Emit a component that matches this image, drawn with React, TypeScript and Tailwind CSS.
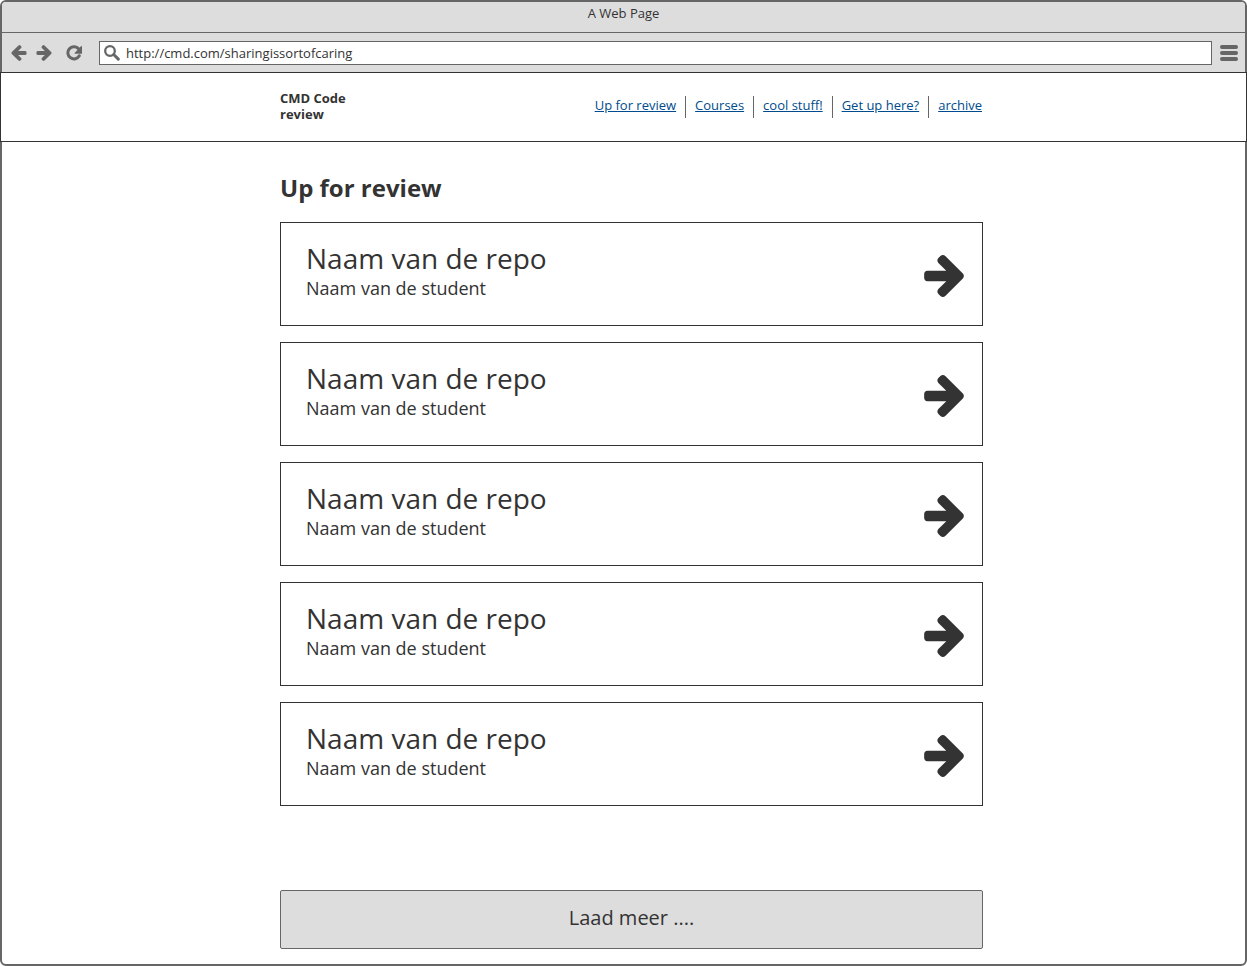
import React from "react";

const ARROW =
  "M1472 960q0 54-37 91l-651 651q-39 37-91 37-51 0-90-37l-75-75q-38-38-38-91t38-91l293-293h-704q-52 0-84.5-37.5t-32.5-90.5v-128q0-53 32.5-90.5t84.5-37.5h704l-293-294q-38-36-38-90t38-90l75-75q38-38 90-38 53 0 91 38l651 651q37 35 37 90z";

function ArrowIcon({ className }: { className: string }) {
  return (
    <svg viewBox="0 181 1472 1558" className={className} fill="currentColor" aria-hidden="true">
      <path d={ARROW} />
    </svg>
  );
}

function ReloadIcon() {
  return (
    <svg viewBox="0 0 16 16" className="size-4" fill="none" aria-hidden="true">
      <path
        d="M12.2 3.4A6.1 6.1 0 1 0 13.3 10.8"
        stroke="currentColor"
        strokeWidth="3"
        strokeLinecap="round"
      />
      <path d="M16 1.4v6.8q0 .5-.5.5H8.9q-.6-.2-.3-.7L15.2 1.1q.6-.3.8.3z" fill="currentColor" />
    </svg>
  );
}

function SearchIcon() {
  return (
    <svg viewBox="0 0 16 16" className="size-4 shrink-0 text-[#666]" fill="none" stroke="currentColor" aria-hidden="true">
      <circle cx="6" cy="6" r="4.8" strokeWidth="2.3" />
      <path d="M9.7 9.5l4.6 4.6" strokeWidth="3" strokeLinecap="round" />
    </svg>
  );
}

function MenuIcon() {
  return (
    <svg viewBox="0 0 18 16" className="h-4 w-[18px]" fill="currentColor" aria-hidden="true">
      <rect x="0" y="0" width="18" height="4" rx="1.9" />
      <rect x="0" y="6" width="18" height="4" rx="1.9" />
      <rect x="0" y="12" width="18" height="4" rx="1.9" />
    </svg>
  );
}

const links = ["Up for review", "Courses", "cool stuff!", "Get up here?", "archive"];

const repos = Array.from({ length: 5 }, (_, id) => ({
  id,
  name: "Naam van de repo",
  student: "Naam van de student",
}));

export default function App() {
  return (
    <div className="min-h-screen rounded-md border-2 border-[#666] bg-white font-['Open_Sans','Noto_Sans',sans-serif] text-[13px] text-[#333]">
      <div className="rounded-t bg-[#ddd]">
        <div className="h-[31px] border-b border-[#666] pt-px text-center leading-5">A Web Page</div>
        <div className="flex h-[39px] items-center pr-[7px] pl-[9px] text-[#666]">
          <button type="button" aria-label="Back" className="mr-[9px]">
            <ArrowIcon className="h-4 w-4 rotate-180" />
          </button>
          <button type="button" aria-label="Forward" className="mr-[14px]">
            <ArrowIcon className="h-4 w-4" />
          </button>
          <button type="button" aria-label="Reload" className="mr-[17px]">
            <ReloadIcon />
          </button>
          <label className="flex h-6 grow items-center gap-1.5 border border-[#666] bg-white pl-1">
            <SearchIcon />
            <input
              type="text"
              aria-label="Address"
              defaultValue="http://cmd.com/sharingissortofcaring"
              className="h-5 min-w-0 grow text-[#333] outline-none"
            />
          </label>
          <button type="button" aria-label="Menu" className="ml-2">
            <MenuIcon />
          </button>
        </div>
      </div>

      <header className="-mx-0.5 border border-[#333] bg-white pl-4">
        <div className="mx-auto flex h-[68px] max-w-[703px] items-start justify-between pt-[17px]">
          <p className="w-20 leading-4 font-bold">CMD Code review</p>
          <nav className="flex pt-1.5 pr-px">
            {links.map((label) => (
              <a
                key={label}
                href="#"
                className="mr-[9px] h-[22px] border-r border-[#666] pr-[9px] leading-[18px] text-[#004b8d] underline last:mr-0 last:border-r-0 last:pr-0"
              >
                {label}
              </a>
            ))}
          </nav>
        </div>
      </header>

      <main className="pb-[15px] pl-4">
        <div className="mx-auto max-w-[703px]">
          <h1 className="pt-[30px] pb-[18px] text-2xl font-bold">Up for review</h1>
          <ul className="flex flex-col gap-4">
            {repos.map((repo) => (
              <li key={repo.id}>
                <a
                  href="#"
                  className="flex h-[104px] items-start justify-between border border-[#333] pt-[17px] pr-[18px] pl-[25px]"
                >
                  <div>
                    <h2 className="text-[28px] leading-9">{repo.name}</h2>
                    <p className="text-lg leading-6">{repo.student}</p>
                  </div>
                  <ArrowIcon className="mt-[15px] h-[42px] w-10" />
                </a>
              </li>
            ))}
          </ul>
          <button
            type="button"
            className="mt-[84px] h-[59px] w-full rounded-xs border border-[#666] bg-[#ddd] pb-1 text-xl"
          >
            Laad meer ....
          </button>
        </div>
      </main>
    </div>
  );
}
